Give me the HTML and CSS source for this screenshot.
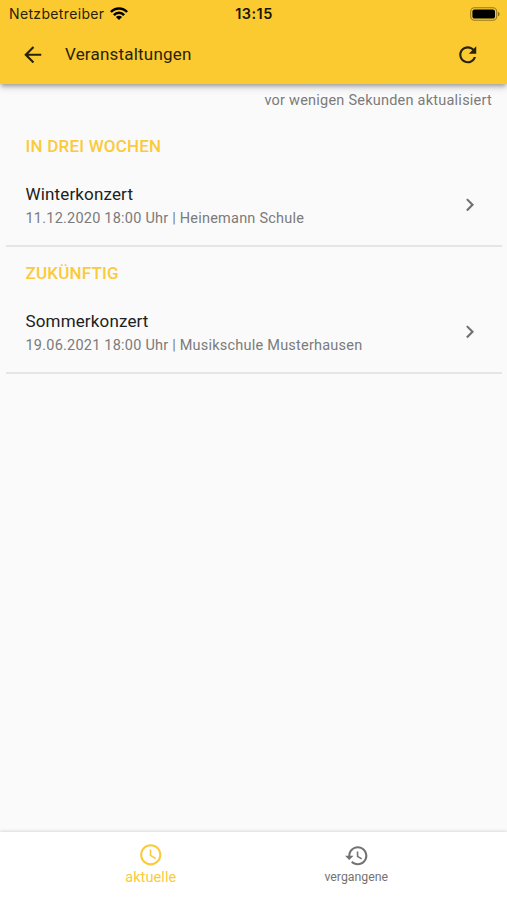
FILE: index.html
```html
<!DOCTYPE html>
<html lang="de">
<head>
<meta charset="utf-8">
<title>Veranstaltungen</title>
<link rel="stylesheet" href="styles.css">
</head>
<body>
<header class="header">
  <div class="status">
    <div class="carrier"><span class="carrier-name">Netzbetreiber</span>
      <svg class="wifi" viewBox="0 0 18 13"><g fill="none" stroke="#000" stroke-width="2.5"><path d="M.9 5C5.3.3 12.7.3 17.1 5"/><path d="M3.9 8.1c2.8-3 7.4-3 10.2 0"/></g><path d="M5.9 10c1.8-1.7 4.4-1.7 6.2 0L9 13z"/></svg>
    </div>
    <span class="time">13:15</span>
    <svg class="battery" viewBox="0 0 30 14"><rect x=".7" y=".7" width="26" height="12.6" rx="3.8" fill="none" stroke="#000" stroke-opacity=".4" stroke-width="1.1"/><rect x="2.4" y="2.4" width="22.6" height="9.2" rx="2.2"/><path d="M28 4.7c2 .8 2 3.8 0 4.6z" opacity=".45"/></svg>
  </div>
  <div class="toolbar">
    <svg class="icon" viewBox="0 0 24 24"><path d="M20 11H7.83l5.59-5.59L12 4l-8 8 8 8 1.41-1.41L7.83 13H20z"/></svg>
    <h1 class="title">Veranstaltungen</h1>
    <svg class="icon" viewBox="0 0 24 24"><path d="M17.65 6.35C16.2 4.9 14.21 4 12 4c-4.42 0-7.99 3.58-7.99 8s3.57 8 7.99 8c3.73 0 6.84-2.55 7.73-6h-2.08c-.82 2.33-3.04 4-5.65 4-3.31 0-6-2.69-6-6s2.69-6 6-6c1.66 0 3.14.69 4.22 1.78L13 11h7V4z"/></svg>
  </div>
</header>
<main class="content">
  <p class="updated">vor wenigen Sekunden aktualisiert</p>
  <section class="group">
    <h2 class="heading">IN DREI WOCHEN</h2>
    <div class="event">
      <div class="info"><div class="name">Winterkonzert</div><div class="detail">11.12.2020 18:00 Uhr | Heinemann Schule</div></div>
      <svg class="icon chevron" viewBox="0 0 24 24"><path d="M10 6L8.59 7.41 13.17 12l-4.58 4.59L10 18l6-6z"/></svg>
    </div>
  </section>
  <section class="group">
    <h2 class="heading">ZUKÜNFTIG</h2>
    <div class="event">
      <div class="info"><div class="name">Sommerkonzert</div><div class="detail">19.06.2021 18:00 Uhr | Musikschule Musterhausen</div></div>
      <svg class="icon chevron" viewBox="0 0 24 24"><path d="M10 6L8.59 7.41 13.17 12l-4.58 4.59L10 18l6-6z"/></svg>
    </div>
  </section>
</main>
<nav class="tabs">
  <div class="tab active">
    <svg class="icon" viewBox="0 0 24 24"><path d="M11.99 2C6.47 2 2 6.48 2 12s4.47 10 9.99 10C17.52 22 22 17.52 22 12S17.52 2 11.99 2zM12 20c-4.42 0-8-3.58-8-8s3.58-8 8-8 8 3.58 8 8-3.58 8-8 8zm.5-13H11v6l5.25 3.15.75-1.23-4.5-2.67z"/></svg>
    <span>aktuelle</span>
  </div>
  <div class="tab past">
    <svg class="icon" viewBox="0 0 24 24"><path d="M13 3c-4.97 0-9 4.03-9 9H1l3.89 3.89.07.14L9 12H6c0-3.87 3.13-7 7-7s7 3.13 7 7-3.13 7-7 7c-1.93 0-3.68-.79-4.94-2.06l-1.42 1.42C8.27 19.99 10.51 21 13 21c4.97 0 9-4.03 9-9s-4.03-9-9-9zm-1 5v5l4.28 2.54.72-1.21-3.5-2.08V8z"/></svg>
    <span>vergangene</span>
  </div>
</nav>
</body>
</html>
```
FILE: styles.css
```css
* { box-sizing: border-box; }
body {
  margin: 0;
  height: 900px;
  display: flex;
  flex-direction: column;
  overflow: hidden;
  background: #fafafa;
  font-family: Roboto, "Liberation Sans", sans-serif;
  color: #212121;
}
h1, h2, p { margin: 0; font-weight: 400; }
.icon { width: 25.5px; height: 25.5px; flex: none; fill: currentColor; display: block; }
.header {
  height: 84px;
  flex: none;
  background: #fbca30;
  color: #2a2208;
  box-shadow: 0 3px 4px -1px rgba(0, 0, 0, .28), 0 4px 7px rgba(0, 0, 0, .13);
  position: relative;
}
.status {
  height: 27px;
  padding: 0 7px 0 9px;
  display: grid;
  grid-template-columns: 1fr auto 1fr;
  align-items: center;
  font-size: 14px;
  line-height: 27px;
}
.carrier { display: flex; align-items: center; gap: 6px; font-family: Inter, sans-serif; letter-spacing: .35px; }
.wifi { width: 18px; height: 13px; margin-top: -1px; }
.time { font-family: Inter, sans-serif; font-weight: 600; font-size: 14.5px; letter-spacing: .5px; margin-left: -1px; color: #1a1503; }
.battery { width: 30px; height: 14px; justify-self: end; }
.toolbar { height: 56px; padding: 0 26.5px 0 20px; display: flex; align-items: center; }
.title { flex: 1; margin-left: 19.5px; font-size: 17px; line-height: 22px; margin-top: -2px; letter-spacing: .2px; }
.content { flex: 1; padding: 0 5px 0 6px; }
.updated {
  height: 36px;
  padding: 7px 10px 0 0;
  text-align: right;
  font-size: 14.5px;
  line-height: 20px;
  letter-spacing: .23px;
  color: #7b7b7b;
}
.group { height: 127px; border-bottom: 2px solid #e5e5e5; }
.heading {
  padding: 16px 0 0 19.5px;
  height: 48px;
  font-size: 17px;
  line-height: 20px;
  font-weight: 500;
  letter-spacing: .2px;
  color: #fbca3b;
}
.event { height: 76px; padding: 0 20px 0 19.5px; display: flex; align-items: center; }
.info { flex: 1; }
.name { font-size: 17px; line-height: 25px; letter-spacing: .15px; }
.detail { font-size: 14.5px; line-height: 23px; letter-spacing: .22px; color: #7b7b7b; }
.chevron { color: #707070; margin-top: -2px; }
.tabs {
  height: 68px;
  flex: none;
  padding: 10px 48px 0;
  display: flex;
  background: #fff;
  box-shadow: 0 -1px 3px rgba(0, 0, 0, .13);
}
.tab { flex: 1; display: flex; flex-direction: column; align-items: center; color: #737373; font-size: 12.3px; line-height: 19px; }
.active { color: #fbca3b; font-size: 14.5px; letter-spacing: .1px; }
.past { padding-top: 1px; line-height: 17px; }
```
